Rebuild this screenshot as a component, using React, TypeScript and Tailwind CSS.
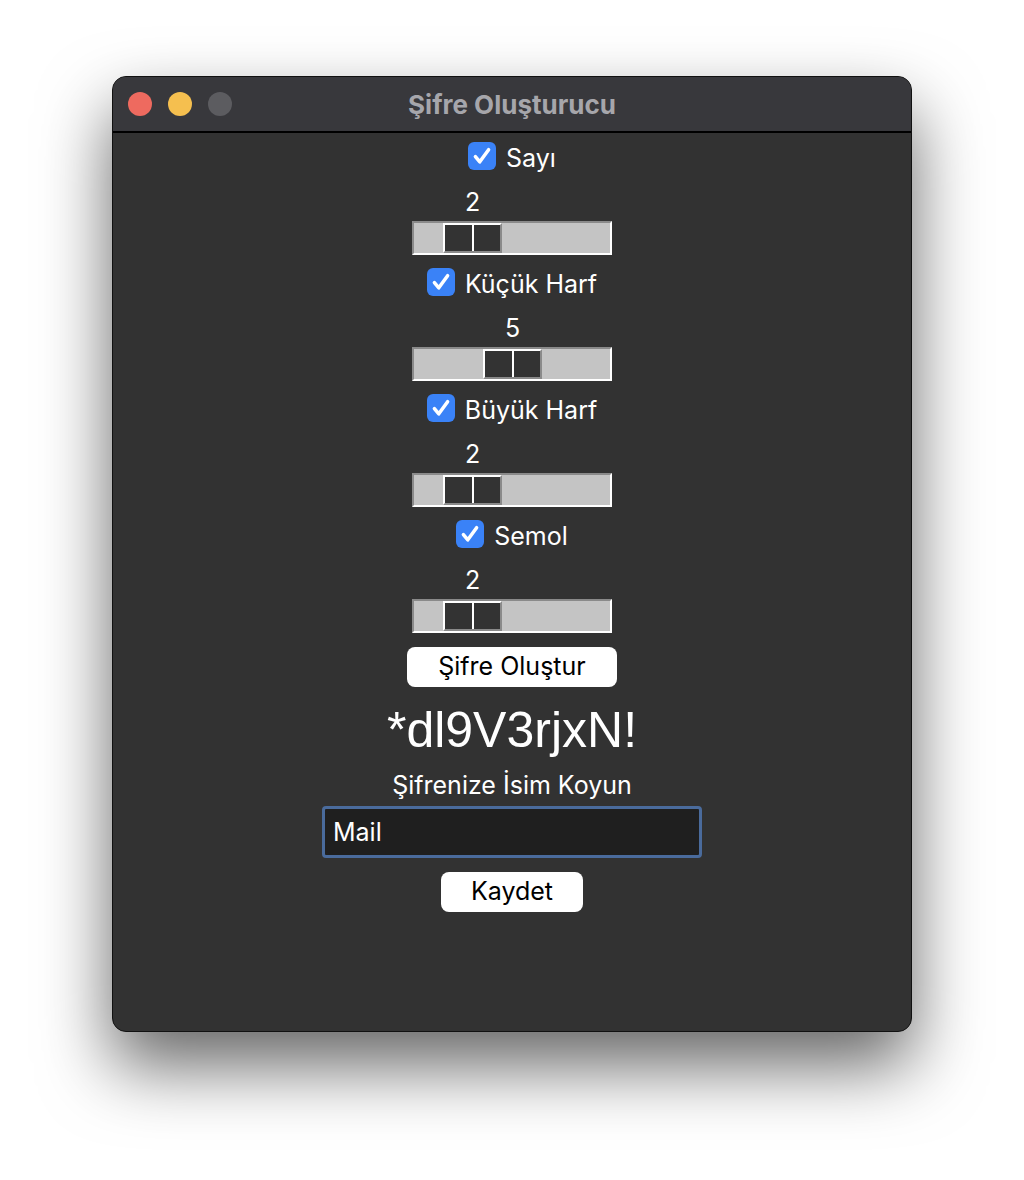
const groups = [
	{ label: "Sayı", value: 2 },
	{ label: "Küçük Harf", value: 5 },
	{ label: "Büyük Harf", value: 2 },
	{ label: "Semol", value: 2 },
];

const Check: React.FC = () => (
	<div className="w-[28px] h-[28px] rounded-[6px] bg-[#3a82f7] flex items-center justify-center">
		<svg width="22" height="22" viewBox="0 0 20 20" fill="none">
			<path
				d="M4 10.5l4 4.8 8-11"
				stroke="white"
				strokeWidth="3.2"
				strokeLinecap="round"
				strokeLinejoin="round"
			/>
		</svg>
	</div>
);

const Scale: React.FC<{ value: number }> = ({ value }) => {
	// 0..10 range, thumb left edge moves ~13.3px per step
	const left = Math.round(2 + value * 13.33);
	return (
		<div className="flex flex-col w-[200px]">
			<div className="h-[30px] leading-[30px] text-[25px] text-white">
				<span
					className="inline-block w-[59px] text-center"
					style={{ marginLeft: left + 2 }}
				>
					{value}
				</span>
			</div>
			<div className="mt-[4px] h-[34px] border-2 border-t-[#8a8a8a] border-l-[#8a8a8a] border-r-white border-b-white bg-[#c4c4c4]">
				<div
					className="flex h-[30px] w-[59px] border-2 border-t-white border-l-white border-r-[#8a8a8a] border-b-[#8a8a8a] bg-[#333]"
					style={{ marginLeft: left }}
				>
					<div className="flex-1 bg-[#333]" />
					<div className="w-[2px] bg-white" />
					<div className="flex-1 bg-[#333]" />
				</div>
			</div>
		</div>
	);
};

export default function App() {
	return (
		<div className="min-h-[1180px] w-[1024px] bg-white pt-[76px] font-['Inter','Noto_Sans',sans-serif]">
			<div className="mx-auto w-[800px] h-[956px] rounded-[14px] border border-[#111] bg-[#323232] overflow-hidden shadow-[0_34px_70px_rgba(0,0,0,0.6)] flex flex-col">
				<div className="relative h-[56px] bg-[#38383c] border-b-2 border-black flex items-center px-[15px] gap-[16px] shrink-0">
					<div className="w-[24px] h-[24px] rounded-full bg-[#ee6a5f]" />
					<div className="w-[24px] h-[24px] rounded-full bg-[#f5bf4f]" />
					<div className="w-[24px] h-[24px] rounded-full bg-[#5c5c60]" />
					<div className="absolute inset-0 flex items-center justify-center text-[26px] font-bold text-[#a6a6ab]">
						Şifre Oluşturucu
					</div>
				</div>
				<div className="flex flex-col items-center pt-[9px] text-white">
					{groups.map((g, i) => (
						<div
							key={g.label}
							className={
								i === 0
									? "flex flex-col items-center"
									: "flex flex-col items-center mt-[13px]"
							}
						>
							<div className="flex items-center gap-[10px] h-[28px]">
								<Check />
								<span className="mt-[3px] text-[25px] leading-[28px]">
									{g.label}
								</span>
							</div>
							<div className="mt-[17px]">
								<Scale value={g.value} />
							</div>
						</div>
					))}
					<button className="mt-[14px] w-[210px] h-[40px] rounded-[8px] bg-white text-black text-[25px]">
						Şifre Oluştur
					</button>
					<div className="mt-[13px] h-[60px] leading-[60px] text-[50px] font-['Liberation_Sans',sans-serif]">
						*dl9V3rjxN!
					</div>
					<div className="mt-[10px] h-[30px] leading-[30px] text-[25px]">
						Şifrenize İsim Koyun
					</div>
					<div className="mt-[6px] w-[380px] h-[52px] rounded-[4px] border-[3px] border-[#4a6b9c] bg-[#1f1f1f] flex items-center px-[8px] pt-[2px] text-[25px]">
						Mail
					</div>
					<button className="mt-[14px] w-[142px] h-[40px] rounded-[8px] bg-white text-black text-[25px]">
						Kaydet
					</button>
				</div>
			</div>
		</div>
	);
}
